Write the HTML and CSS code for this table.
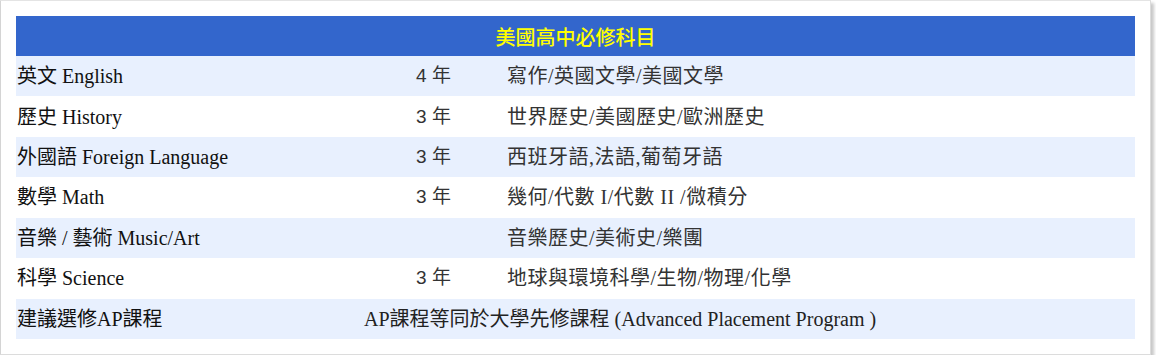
FILE: index.html
```html
<!DOCTYPE html>
<html lang="zh-Hant">
<head>
<meta charset="utf-8">
<link rel="stylesheet" href="styles.css">
</head>
<body>
<div class="panel">
  <table class="courses">
    <colgroup>
      <col class="c-subject">
      <col class="c-years">
      <col class="c-detail">
    </colgroup>
    <thead>
      <tr><th colspan="3">美國高中必修科目</th></tr>
    </thead>
    <tbody>
      <tr class="alt"><td class="subject">英文 English</td><td class="years">4 年</td><td class="detail">寫作/英國文學/美國文學</td></tr>
      <tr><td class="subject">歷史 History</td><td class="years">3 年</td><td class="detail">世界歷史/美國歷史/歐洲歷史</td></tr>
      <tr class="alt"><td class="subject">外國語 Foreign Language</td><td class="years">3 年</td><td class="detail">西班牙語,法語,葡萄牙語</td></tr>
      <tr><td class="subject">數學 Math</td><td class="years">3 年</td><td class="detail">幾何/代數 I/代數 II /微積分</td></tr>
      <tr class="alt"><td class="subject">音樂 / 藝術 Music/Art</td><td class="years"></td><td class="detail">音樂歷史/美術史/樂團</td></tr>
      <tr><td class="subject">科學 Science</td><td class="years">3 年</td><td class="detail">地球與環境科學/生物/物理/化學</td></tr>
      <tr class="alt"><td class="subject">建議選修AP課程</td><td class="ap" colspan="2">AP課程等同於大學先修課程 (Advanced Placement Program )</td></tr>
    </tbody>
  </table>
</div>
</body>
</html>
```

FILE: styles.css
```css
html, body {
  margin: 0;
  padding: 0;
  background: #ffffff;
}

.panel {
  width: 1119px;
  padding: 15px 15px 15px 15px;
  border-top: 1px solid #e4e4e4;
  border-left: 2px solid #d4d4d4;
  border-right: 1px solid #dcdcdc;
  border-bottom: 1px solid #dcdcdc;
  background: #ffffff;
  box-shadow: 3px 3px 3px rgba(0, 0, 0, 0.22);
  margin-left: -1px;
}

.courses {
  width: 1119px;
  border-collapse: collapse;
  table-layout: fixed;
  font-family: "Liberation Serif", "Noto Sans CJK TC", serif;
  font-size: 20px;
  color: #000;
}

.c-subject { width: 344px; }
.c-years { width: 146px; }
.c-detail { width: 629px; }

.courses th {
  height: 40px;
  padding: 0;
  background: #3366cc;
  color: #ffff00;
  font-family: "Noto Sans CJK TC", sans-serif;
  font-size: 20px;
  font-weight: 500;
  text-align: center;
  vertical-align: middle;
}

.courses td {
  height: 40.43px;
  padding: 0 0 0 1px;
  vertical-align: middle;
  white-space: nowrap;
  line-height: 24px;
}

.courses tr.alt td {
  background: #e8f0fe;
}

.subject {
  color: #111;
}

.years {
  text-align: center;
  color: #333;
  font-family: "Liberation Sans", "Noto Sans CJK TC", sans-serif;
  font-size: 19px;
}

.detail {
  color: #333;
  letter-spacing: 0.5px;
}

.courses td.ap {
  padding-left: 4px;
  color: #222;
}
```
